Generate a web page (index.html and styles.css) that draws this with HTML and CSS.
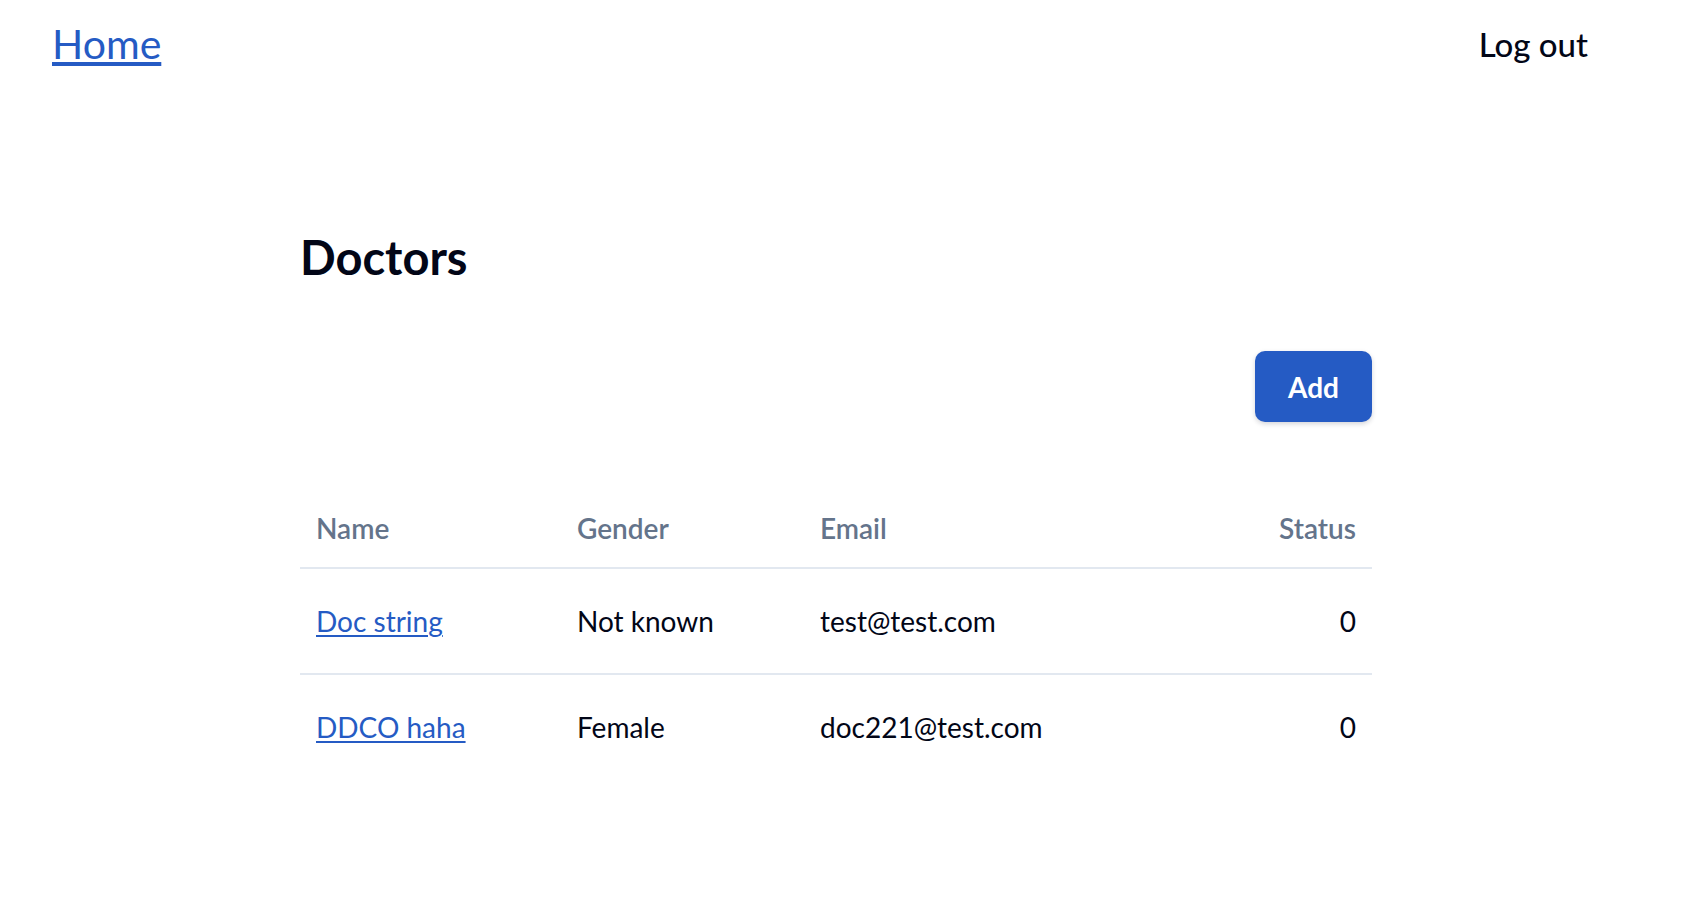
FILE: index.html
```html
<!DOCTYPE html>
<html lang="en">
<head>
<meta charset="utf-8">
<title>Doctors</title>
<link rel="stylesheet" href="styles.css">
</head>
<body>
<nav class="nav">
  <a class="nav-home" href="#">Home</a>
  <a class="nav-logout" href="#">Log out</a>
</nav>
<main class="main">
  <h1 class="title">Doctors</h1>
  <div class="toolbar">
    <button class="btn-add" type="button">Add</button>
  </div>
  <table class="table">
    <colgroup>
      <col class="col-name">
      <col class="col-gender">
      <col class="col-email">
      <col class="col-status">
    </colgroup>
    <thead>
      <tr>
        <th>Name</th>
        <th>Gender</th>
        <th>Email</th>
        <th class="num">Status</th>
      </tr>
    </thead>
    <tbody>
      <tr>
        <td><a class="row-link" href="#">Doc string</a></td>
        <td>Not known</td>
        <td>test@test.com</td>
        <td class="num">0</td>
      </tr>
      <tr>
        <td><a class="row-link" href="#">DDCO haha</a></td>
        <td>Female</td>
        <td>doc221@test.com</td>
        <td class="num">0</td>
      </tr>
    </tbody>
  </table>
</main>
</body>
</html>
```

FILE: styles.css
```css
* { box-sizing: border-box; }

body {
  margin: 0;
  font-family: "Lato", "Liberation Sans", sans-serif;
  color: #020617;
  background: #ffffff;
}

.nav {
  display: flex;
  justify-content: space-between;
  align-items: center;
  padding: 20px 110px 0 52px;
}

.nav-home {
  font-size: 41px;
  line-height: 48px;
  color: #255bc4;
  text-decoration: underline;
  text-decoration-thickness: 4px;
  text-underline-offset: 3px;
}

.nav-logout {
  font-size: 33px;
  line-height: 38px;
  color: #020617;
  text-decoration: none;
  font-weight: 500;
}

.main {
  width: 1372px;
  padding-left: 300px;
}

.title {
  margin: 162px 0 0 0;
  font-size: 47px;
  line-height: 55px;
  font-weight: 700;
  color: #020617;
}

.toolbar {
  display: flex;
  justify-content: flex-end;
  margin-top: 66px;
}

.btn-add {
  font-family: inherit;
  font-size: 28px;
  font-weight: 700;
  line-height: 42px;
  padding: 14.5px 33px;
  color: #ffffff;
  background: #255bc4;
  border: none;
  border-radius: 10px;
  box-shadow: 0 2px 5px rgba(15, 23, 42, 0.18);
}

.table {
  width: 100%;
  margin-top: 67px;
  border-collapse: collapse;
  table-layout: fixed;
  font-size: 28px;
  line-height: 42px;
}

.col-name { width: 261px; }
.col-gender { width: 243px; }
.col-status { width: 200px; }

.table th {
  text-align: left;
  font-weight: 600;
  color: #64748b;
  padding: 18px 16px;
  border-bottom: 2px solid #e2e8f0;
}

.table td {
  padding: 31px 16px;
  color: #020617;
}

.table tbody tr + tr td {
  border-top: 2px solid #e2e8f0;
}

.table .num { text-align: right; }

.row-link {
  color: #255bc4;
  text-decoration: underline;
  text-decoration-thickness: 2px;
  text-underline-offset: 3px;
}
```
